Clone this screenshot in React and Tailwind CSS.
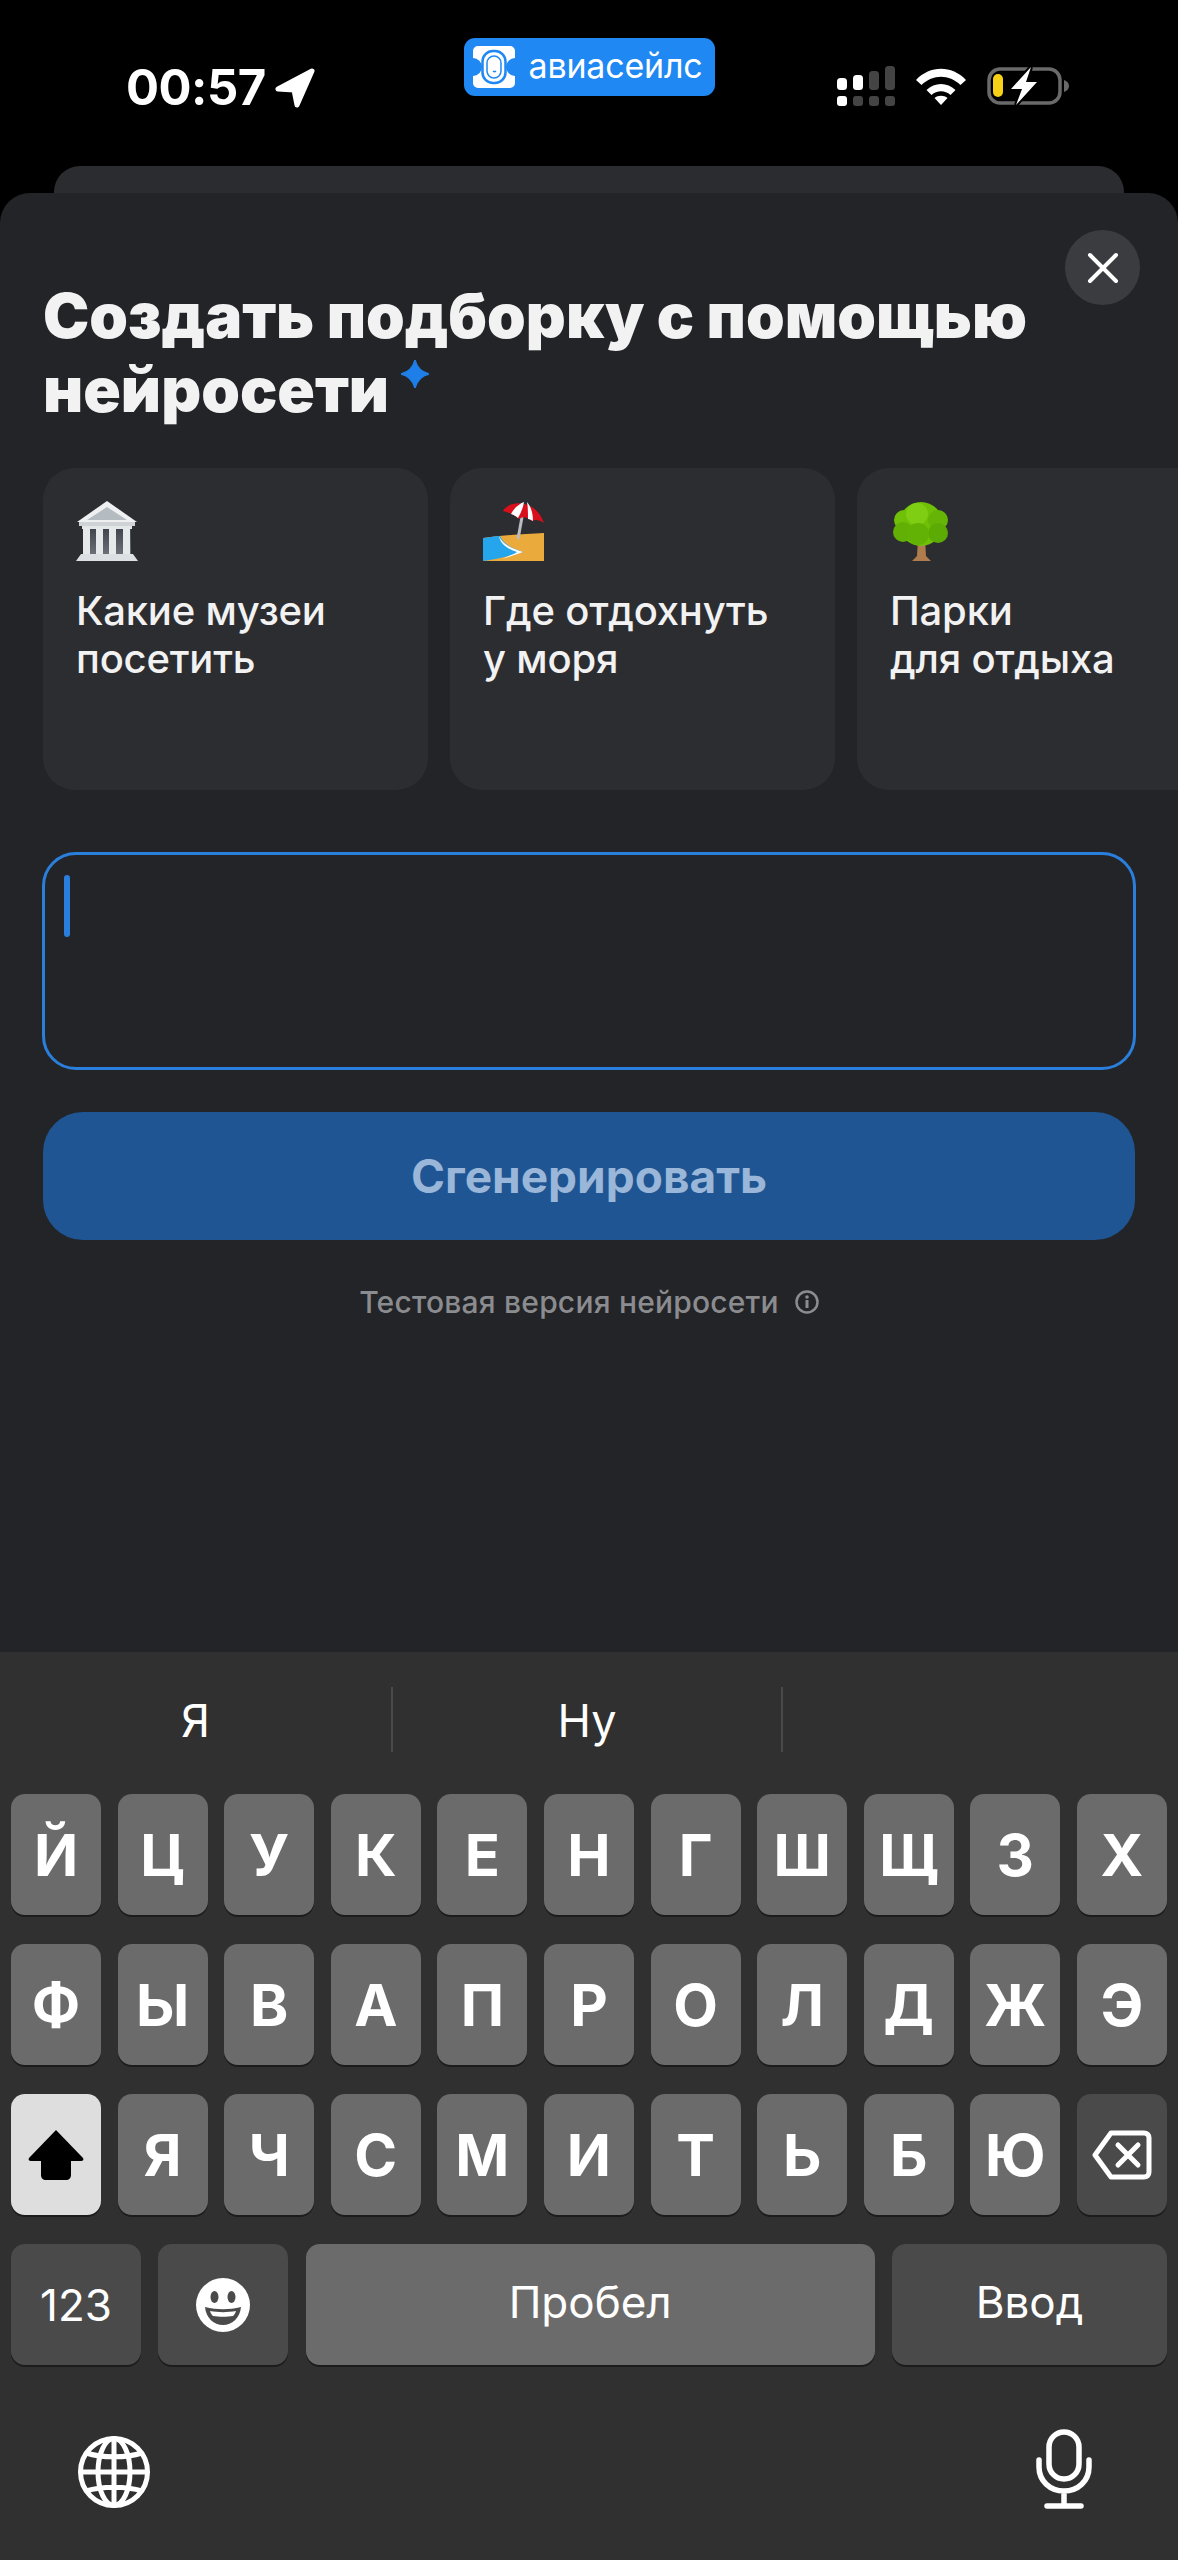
import React from "react";

const rows = [
  ["Й", "Ц", "У", "К", "Е", "Н", "Г", "Ш", "Щ", "З", "Х"],
  ["Ф", "Ы", "В", "А", "П", "Р", "О", "Л", "Д", "Ж", "Э"],
  ["Я", "Ч", "С", "М", "И", "Т", "Ь", "Б", "Ю"],
];

const Key = ({ children, className = "" }) => (
  <div
    className={`h-[121px] rounded-[14px] flex items-center justify-center shadow-[0_2px_0_#1c1c1c] ${className}`}
  >
    {children}
  </div>
);

const Letter = ({ char }) => (
  <Key className="w-[90px] bg-[#6b6b6b] text-white text-[58px] font-bold leading-none">
    {char}
  </Key>
);

const LogoBadge = () => (
  <div className="w-[251px] h-[58px] mt-[38px] rounded-[11px] bg-[#1f88f2] flex items-center pl-[9px] gap-[14px]">
    <svg width="42" height="42" viewBox="0 0 42 42">
      <path
        d="M5 0H37a5 5 0 0 1 5 5V12a9 9 0 0 0 0 18V37a5 5 0 0 1-5 5H5a5 5 0 0 1-5-5V30a9 9 0 0 0 0-18V5a5 5 0 0 1 5-5Z"
        fill="#fff"
      />
      <rect x="9.500" y="5" width="23" height="32" rx="10.500" fill="none" stroke="#1f88f2" strokeWidth="2.500" />
      <rect x="14" y="10" width="14" height="22" rx="7" fill="none" stroke="#1f88f2" strokeWidth="1.500" />
      <path d="M20 25c1 1 2 1 3 0" fill="none" stroke="#1f88f2" strokeWidth="1.500" />
    </svg>
    <span className="text-white text-[34px] leading-none font-['Inter',sans-serif] -mt-[3px] tracking-[-0.2px]">
      авиасейлс
    </span>
  </div>
);

const StatusIcons = () => (
  <div className="flex items-center mt-[66px] mr-[109px] h-[40px]">
    <svg width="58" height="40" viewBox="0 0 58 40" className="mr-[21px]">
      <rect x="0" y="12" width="10" height="12" rx="3.500" fill="#fff" />
      <rect x="16" y="9" width="10" height="15" rx="3.500" fill="#fff" />
      <rect x="32" y="5" width="10" height="19" rx="3.500" fill="#444" />
      <rect x="48" y="0" width="10" height="24" rx="3.500" fill="#444" />
      <rect x="0" y="30" width="10" height="10" rx="3" fill="#fff" />
      <rect x="16" y="30" width="10" height="10" rx="3" fill="#444" />
      <rect x="32" y="30" width="10" height="10" rx="3" fill="#444" />
      <rect x="48" y="30" width="10" height="10" rx="3" fill="#444" />
    </svg>
    <svg width="50" height="38" viewBox="0 0 50 38" className="mr-[21px]">
      <path d="M0 13C14-2 36-2 50 13l-5.500 5C33 7 17 7 5.500 18Z" fill="#fff" />
      <path d="M10.500 23c8-8 21-8 29 0l-5 5c-5.500-5-13.500-5-19 0Z" fill="#fff" />
      <path d="M18.500 31c3.500-3 9.500-3 13 0l-6.500 7Z" fill="#fff" />
    </svg>
    <svg width="82" height="40" viewBox="0 0 82 40">
      <rect x="2" y="3" width="71" height="34" rx="11" fill="none" stroke="#6a6a6a" strokeWidth="3.500" />
      <rect x="6" y="8" width="10" height="23" rx="5" fill="#f7d117" />
      <path d="M77 14c3 1 5 3 5 6s-2 5-5 6Z" fill="#6a6a6a" />
      <path d="M44 1 24 23h11l-6 16 21-23H39Z" fill="#fff" stroke="#000" strokeWidth="4" paintOrder="stroke" />
    </svg>
  </div>
);

const MuseumIcon = () => (
  <svg width="62" height="61" viewBox="0 0 62 61">
    <defs>
      <linearGradient id="gap" x1="0" y1="0" x2="0" y2="1">
        <stop offset="0" stopColor="#3f434b" />
        <stop offset="1" stopColor="#6b7078" />
      </linearGradient>
    </defs>
    <path d="M31 0 61 21H1Z" fill="#eef0f1" />
    <path d="M31 6 51 19H11Z" fill="#b4bcc1" />
    <rect x="3" y="21" width="56" height="4" fill="#cfd3d6" />
    <rect x="7" y="27" width="48" height="26" fill="url(#gap)" />
    <rect x="6" y="25" width="50" height="3" fill="#e4e7e8" />
    <rect x="7" y="27" width="7" height="27" fill="#e6e9ea" />
    <rect x="20" y="27" width="7" height="27" fill="#e6e9ea" />
    <rect x="33" y="27" width="7" height="27" fill="#e6e9ea" />
    <rect x="47" y="27" width="7" height="27" fill="#e6e9ea" />
    <path d="M5 53H57L62 60H0Z" fill="#dde0e2" />
  </svg>
);

const BeachIcon = () => (
  <svg width="62" height="61" viewBox="0 0 62 61">
    <path d="M0 37C20 34 42 33 61 32V60H0Z" fill="#eaaa3c" />
    <path d="M0 37c8-1 13-2 17-2 3 7 9 11 23 16-12 4-26 7-40 9Z" fill="#25a6ec" />
    <path d="M16 35c3 7 10 12 24 16-8 3-14 5-21 7 8-4 13-5 15-7-9-3-17-8-18-16Z" fill="#fff" />
    <path d="M39 16 35 38" stroke="#b8bcc0" strokeWidth="3" />
    <path d="M20 10C26-1 52-3 61 22c-4-3-9-4-12-2-5-4-9-5-13-2-4-4-9-6-16-8Z" fill="#d9101c" />
    <path d="M28 13C31 7 36 3 41 1c-1 6-3 11-6 16-2-2-4-3-7-4ZM44 1c4 5 6 11 6 19-2-1-3-2-5-2 0-6 0-12-1-17Z" fill="#fff" />
  </svg>
);

const TreeIcon = () => (
  <svg width="62" height="61" viewBox="0 0 62 61">
    <path d="M28 38h7l1 17 5 5H22l5-5Z" fill="#b07c4e" />
    <circle cx="31" cy="23" r="22" fill="#6fc007" />
    <circle cx="14" cy="19" r="10" fill="#6fc007" />
    <circle cx="48" cy="19" r="10" fill="#66b506" />
    <circle cx="13" cy="31" r="10" fill="#62b005" />
    <circle cx="48" cy="32" r="10" fill="#5cab05" />
    <circle cx="27" cy="13" r="11" fill="#7fce14" />
    <circle cx="28" cy="33" r="11" fill="#62b206" />
  </svg>
);

const Suggestion = ({ icon, lines }) => (
  <div className="w-[385px] h-[322px] shrink-0 rounded-[32px] bg-[#2c2d31] pl-[33px] pt-[33px]">
    {icon}
    <div className="mt-[25px] text-[#f2f2f3] text-[40px] leading-[48px] font-medium tracking-[-0.2px]">
      {lines.map((l) => (
        <div key={l}>{l}</div>
      ))}
    </div>
  </div>
);

export default function App() {
  return (
    <div className="w-[1178px] h-[2560px] bg-black flex flex-col overflow-hidden font-['Inter',sans-serif]">
      {/* Status bar */}
      <div className="h-[166px] shrink-0 flex justify-between items-start">
        <div className="w-[400px] flex items-center pl-[126px] pt-[62px]">
          <span className="text-white text-[49px] leading-[52px] font-bold tracking-[-0.5px]">00:57</span>
          <svg width="40" height="40" viewBox="0 0 40 40" className="ml-[9px]">
            <path
              d="M37 3 3 21 19 22 22 37Z"
              fill="#fff"
              stroke="#fff"
              strokeWidth="5"
              strokeLinejoin="round"
            />
          </svg>
        </div>
        <LogoBadge />
        <div className="w-[400px] flex justify-end">
          <StatusIcons />
        </div>
      </div>

      {/* Sheet stacked behind */}
      <div className="h-[27px] shrink-0 mx-[54px] rounded-t-[26px] bg-[#2b2c30]" />

      {/* Sheet */}
      <div className="relative flex-1 rounded-t-[30px] bg-[#232428]">
        <button className="absolute top-[37px] right-[38px] w-[75px] h-[75px] rounded-full bg-[#3b3c40] flex items-center justify-center">
          <svg width="32" height="32" viewBox="0 0 32 32">
            <path d="M3 3 29 29M29 3 3 29" stroke="#fff" strokeWidth="4" strokeLinecap="round" />
          </svg>
        </button>

        <h1 className="pl-[43px] pt-[86px] text-[#f2f2f3] text-[62px] leading-[74px] font-black">
          <div>Создать подборку с помощью</div>
          <div className="flex items-start">
            нейросети
            <svg width="28" height="28" viewBox="0 0 30 30" className="ml-[12px] mt-[7px]">
              <path d="M15 0C17 8 22 13 30 15 22 17 17 22 15 30 13 22 8 17 0 15 8 13 13 8 15 0Z" fill="#1f7fe8" stroke="#1f7fe8" strokeWidth="1.500" strokeLinejoin="round" />
            </svg>
          </div>
        </h1>

        <div className="flex gap-[22px] pl-[43px] mt-[41px] overflow-hidden">
          <Suggestion icon={<MuseumIcon />} lines={["Какие музеи", "посетить"]} />
          <Suggestion icon={<BeachIcon />} lines={["Где отдохнуть", "у моря"]} />
          <Suggestion icon={<TreeIcon />} lines={["Парки", "для отдыха"]} />
        </div>

        <div className="mx-[42px] mt-[62px] h-[218px] rounded-[34px] border-[3px] border-[#2a7fdc] pl-[19px] pt-[20px]">
          <div className="w-[6px] h-[62px] rounded-full bg-[#2a7fdc]" />
        </div>

        <div className="mx-[43px] mt-[42px] h-[128px] rounded-[40px] bg-[#1f5592] flex items-center justify-center text-[#9ab6d8] text-[46px] font-bold">
          Сгенерировать
        </div>

        <div className="mt-[44px] flex items-center justify-center gap-[16px] text-[#8b8c8f] text-[30px] leading-[36px] font-medium tracking-[0.2px]">
          Тестовая версия нейросети
          <svg width="24" height="24" viewBox="0 0 24 24">
            <circle cx="12" cy="12" r="10.500" fill="none" stroke="#8b8c8f" strokeWidth="2.500" />
            <rect x="10.500" y="10" width="3" height="8" fill="#8b8c8f" />
            <circle cx="12" cy="7" r="1.800" fill="#8b8c8f" />
          </svg>
        </div>
      </div>

      {/* Keyboard */}
      <div className="h-[908px] shrink-0 bg-[#303030] flex flex-col">
        <div className="h-[142px] shrink-0 flex items-start pt-[35px] text-white text-[45px] leading-[67px]">
          <div className="w-[391px] text-center h-[65px]">Я</div>
          <div className="w-[392px] text-center h-[65px] border-x-2 border-[#4a4a4a]">Ну</div>
        </div>
        <div className="flex flex-col gap-[29px] px-[11px]">
          {rows.slice(0, 2).map((row, i) => (
            <div key={i} className="flex justify-between">
              {row.map((c) => (
                <Letter key={c} char={c} />
              ))}
            </div>
          ))}
          <div className="flex justify-between">
            <Key className="w-[90px] bg-[#dedede]">
              <svg width="60" height="52" viewBox="0 0 60 52">
                <path
                  d="M30 1 57 29c1 2 0 3-2 3H45V46c0 3-2 5-5 5H20c-3 0-5-2-5-5V32H5c-2 0-3-1-2-3Z"
                  fill="#000"
                />
              </svg>
            </Key>
            {rows[2].map((c) => (
              <Letter key={c} char={c} />
            ))}
            <Key className="w-[90px] bg-[#4a4a4a]">
              <svg width="60" height="50" viewBox="0 0 60 50">
                <path
                  d="M19 3H52c3 0 5 2 5 5V42c0 3-2 5-5 5H19L3 25Z"
                  fill="none"
                  stroke="#fff"
                  strokeWidth="5"
                  strokeLinejoin="round"
                />
                <path d="M26 15 46 35M46 15 26 35" stroke="#fff" strokeWidth="5" strokeLinecap="round" />
              </svg>
            </Key>
          </div>
          <div className="flex justify-between text-white text-[44px] leading-none">
            <Key className="w-[130px] bg-[#4a4a4a]">123</Key>
            <Key className="w-[130px] bg-[#4a4a4a]">
              <svg width="54" height="54" viewBox="0 0 54 54">
                <circle cx="27" cy="27" r="27" fill="#fff" />
                <ellipse cx="18.500" cy="19" rx="4" ry="6" fill="#4a4a4a" />
                <ellipse cx="35.500" cy="19" rx="4" ry="6" fill="#4a4a4a" />
                <path d="M9 29c12 3 24 3 36 0-1 11-9 18-18 18S10 40 9 29Z" fill="#4a4a4a" />
                <path d="M14 33c8 1.500 18 1.500 26 0-1 3-2 4-3 5-6 1-14 1-20 0-1-1-2-2-3-5Z" fill="#fff" />
              </svg>
            </Key>
            <Key className="w-[569px] bg-[#6b6b6b] pb-[5px]">Пробел</Key>
            <Key className="w-[275px] bg-[#4a4a4a] pb-[5px]">Ввод</Key>
          </div>
        </div>
        <div className="flex justify-between items-end pl-[78px] pr-[86px] mt-[64px]">
          <svg width="72" height="74" viewBox="0 0 72 74" fill="none" stroke="#fff" strokeWidth="5">
            <circle cx="36" cy="37" r="33.500" />
            <ellipse cx="36" cy="37" rx="16" ry="33.500" />
            <path d="M36 3V71M2 37H70M8 18c16 5 40 5 56 0M8 56c16-5 40-5 56 0" />
          </svg>
          <svg width="56" height="80" viewBox="0 0 56 80" fill="none" stroke="#fff" strokeWidth="5.500" strokeLinecap="round">
            <rect x="13" y="3" width="30" height="47" rx="15" />
            <path d="M3 31V38C3 52 14 62 28 62S53 52 53 38V31M28 62V76M11 77H45" />
          </svg>
        </div>
      </div>
    </div>
  );
}
